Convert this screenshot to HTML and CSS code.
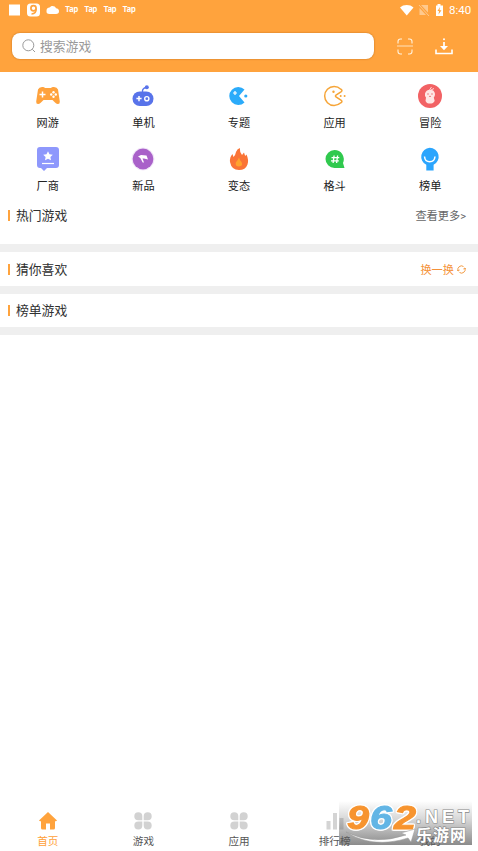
FILE: index.html
```
<!DOCTYPE html>
<html lang="zh-CN">
<head>
<meta charset="utf-8">
<title>首页</title>
<link rel="stylesheet" href="styles.css">
</head>
<body>
<div class="app">
  <header class="header">
    <div class="status">
      <svg class="status-left" width="50" height="14" viewBox="0 0 50 14">
        <rect width="11" height="11" y="1.5" fill="#fff"/>
        <rect x="18" y="0.5" width="13" height="13" rx="3.5" fill="#fff"/>
        <circle cx="24.5" cy="5.3" r="2.6" fill="none" stroke="#ffa33d" stroke-width="1.7"/>
        <path d="M27 5.5C27.300 9 25.800 11 22.500 11" fill="none" stroke="#ffa33d" stroke-width="1.700"/>
        <path d="M40.500 11a3 3 0 0 1-3-3.300C37.500 5.500 39 4.600 40.500 4.600C42 2.200 46 2.500 47 5.300C49 5.500 50 6.700 50 8.200C50 10 49 11 47 11Z" fill="#fff"/>
      </svg>
      <span class="tap">Tap</span><span class="tap">Tap</span><span class="tap">Tap</span><span class="tap">Tap</span>
      <svg class="status-right" width="46" height="14" viewBox="0 0 46 14">
        <path d="M1 4.500C4.500 1.200 11 1.200 14.500 4.500L7.750 12.500Z" fill="#fff"/>
        <path d="M22 2L29 9.500V2ZM20.500 5V12H27Z" fill="#ffc98d"/><path d="M20 2L30 13" stroke="#ffc98d"/>
        <path d="M37 2.500h1.500V1h3v1.500H44v10.500H37Z" fill="#fff"/>
        <path d="M41 4L38.500 8h1.500L39.500 11.500L42.500 7.200h-2Z" fill="#ffa33d"/>
      </svg>
      <span class="time">8:40</span>
    </div>
    <div class="search-row">
      <div class="search">
        <svg width="14" height="14" viewBox="0 0 14 14" fill="none" stroke="#999"><circle cx="6.300" cy="6.300" r="5.500"/><path d="M10.300 10.300L13 13"/></svg>
        <span>搜索游戏</span>
      </div>
      <svg class="scan" width="16" height="17" viewBox="0 0 16 17" fill="none" stroke="#fff3df" stroke-width="1.100"><path d="M1 5.500V3.500Q1 1 3.500 1H5M11 1h1.500Q15 1 15 3.500V5.500M15 11.500v2Q15 16 12.500 16H11M5 16H3.500Q1 16 1 13.500V11.500"/><path d="M0 8H16" stroke-width=".8"/></svg>
      <svg class="download" width="18" height="17" viewBox="0 0 18 17"><path d="M1 11.500V15.500H17V11.500" fill="none" stroke="#fff" stroke-width="1.600"/><path d="M9 4V10" stroke="#fff" stroke-width="1.700"/><path d="M5 8L9 12.300L13 8Z" fill="#fff"/><circle cx="9" cy="1.300" r="1" fill="#fff"/></svg>
    </div>
  </header>

  <nav class="categories">
    <a class="cat"><svg viewBox="0 0 26 26"><path d="M7 4Q9 3.500 10 5H16Q17 3.500 19 4Q22 4 23 6.500L24.800 18.500Q25 21 23 21Q21.500 21.300 19.500 19L17.500 17H8.500L6.500 19Q4.500 21.300 3 21Q1 21 1.200 18.500L3 6.500Q4 4 7 4Z" fill="#ffa23c"/><path d="M7.500 8.500v6M4.500 11.500h6" stroke="#fff" stroke-width="1.500"/><g fill="#fff"><circle cx="18.500" cy="9.300" r="1.200"/><circle cx="18.500" cy="13.700" r="1.200"/><circle cx="16.200" cy="11.500" r="1.200"/><circle cx="20.800" cy="11.500" r="1.200"/></g></svg><span>网游</span></a>
    <a class="cat"><svg viewBox="0 0 26 26"><rect x="2.500" y="8.500" width="21" height="14.500" rx="7.250" fill="#5873ea"/><path d="M12.500 9Q12 5.500 16 4.500" fill="none" stroke="#5873ea" stroke-width="1.300"/><circle cx="16.800" cy="4.300" r="2" fill="#5873ea"/><path d="M9 13v5.200M6.400 15.600h5.200" stroke="#fff" stroke-width="1.500"/><circle cx="16.800" cy="15.700" r="2.100" fill="none" stroke="#fff" stroke-width="1.400"/></svg><span>单机</span></a>
    <a class="cat"><svg viewBox="0 0 26 26"><path d="M18.500 6.500A9 9 0 1 0 18.500 19.500L13 13Z" fill="#2babfa"/><path d="M9 8v4M7 10h4" stroke="#fff" stroke-width="1.200"/><circle cx="19.800" cy="13" r="1.600" fill="#2babfa"/></svg><span>专题</span></a>
    <a class="cat"><svg viewBox="0 0 26 26"><path d="M18.800 6.200A9.500 9.500 0 1 0 18.800 19.800Q20.800 18.600 19.300 17.400L14 14Q12.900 13 14 12L19.300 8.600Q20.800 7.400 18.800 6.200Z" fill="none" stroke="#f6a538" stroke-width="1.500"/><circle cx="11.500" cy="8.800" r="1.200" fill="#f6a538"/><circle cx="18.700" cy="13" r="1" fill="#f6a538"/><circle cx="22.600" cy="13" r="1" fill="#f6a538"/></svg><span>应用</span></a>
    <a class="cat"><svg viewBox="0 0 26 26"><circle cx="13" cy="13" r="12" fill="#f26264"/><path d="M9 14.500Q7.500 13 8 10.500Q9 6.700 13 6.700Q17.500 6.700 18 11Q18 13.500 16.800 14.500L17.700 18L16 20Q13 21 10 20L8.500 18Z" fill="#ffe6e4"/><path d="M12.500 7L14.500 4M14 7L17 5.500" stroke="#ffd6d6"/><circle cx="11" cy="11" r=".7" fill="#e76265"/><circle cx="15" cy="11" r=".7" fill="#e76265"/><path d="M12 13.400h2" stroke="#e76265" stroke-width=".8"/></svg><span>冒险</span></a>
    <a class="cat"><svg viewBox="0 0 26 26"><path d="M5 1H21Q24 1 24 4V19Q24 22 21 22H12L9 25L6 22H5Q2 22 2 19V4Q2 1 5 1Z" fill="#8e98fc"/><path d="M13 5.300l1.500 3 3.300.4-2.400 2.300.6 3.300-3-1.600-3 1.600.6-3.300-2.400-2.300 3.300-.4Z" fill="#fff"/><path d="M7 17.500h12" stroke="#fff" stroke-width="1.200"/></svg><span>厂商</span></a>
    <a class="cat"><svg viewBox="0 0 26 26"><circle cx="13" cy="13" r="11" fill="none" stroke="#ead8f3" stroke-width=".7"/><circle cx="13" cy="13" r="10.400" fill="#a961c9"/><path d="M8 10.500L11 9L16.500 9.500L18 13.500L14 12.500L12.500 12.500L14 16.500H12.700L10.300 12Z" fill="#fff"/></svg><span>新品</span></a>
    <a class="cat"><svg viewBox="0 0 26 26"><path d="M4 16Q3.500 11 6.500 8L7.500 11Q9.500 9 10 6Q11 3 13.800 2Q13.600 6 16 9L18 6.500Q18.500 8 19.200 10L20.500 8.500Q23 14 21.500 18.500Q19.500 24 13 24Q5.500 24 4 16Z" fill="#fa7436"/><path d="M13 11.500Q13.500 14 15.500 16Q17.500 20 13 20.500Q9 20.500 9.800 16.500Q12 14 13 11.500Z" fill="#ffa32d"/></svg><span>变态</span></a>
    <a class="cat"><svg viewBox="0 0 26 26"><path d="M12.500 4A9.200 9.200 0 0 1 21 17L22.500 22H12.500A9 9 0 0 1 12.500 4Z" fill="#30c94e"/><path d="M12.100 9.500L11.100 17M15.600 9.500L14.600 17M9.500 11.700h7.800M9 14.900h7.800" stroke="#fff" stroke-width="1.300"/></svg><span>格斗</span></a>
    <a class="cat"><svg viewBox="0 0 26 26"><path d="M12.700 1.700A9 9 0 0 1 16.600 18.800V24.500H9.300V18.800A9 9 0 0 1 12.700 1.700Z" fill="#2ba5fd"/><path d="M7.500 10.500Q8 15.800 12.700 15.800Q17.500 15.800 18 10.500" fill="none" stroke="#fff" stroke-width="1.500"/></svg><span>榜单</span></a>
  </nav>

  <main>
    <section class="section hot"><h2><span>热门游戏</span></h2><a class="more">查看更多&gt;</a></section>
    <section class="section guess"><h2><span>猜你喜欢</span></h2><a class="swap">换一换<svg width="9" height="9" viewBox="0 0 9 9" fill="none" stroke="#f29a42"><path d="M1.200 6A3.600 3.600 0 0 1 6.500 1.500M7.800 3A3.600 3.600 0 0 1 2.500 7.500M0 4.700L1.200 6L2.600 5M6.400 4L7.800 3L9 4.300"/></svg></a></section>
    <section class="section rank"><h2><span>榜单游戏</span></h2></section>
  </main>

  <footer class="tabs">
    <a class="tab active"><svg viewBox="0 0 20 20"><path d="M10 1L19 9.500Q18.500 10.500 17 10.200V17Q17 18.500 15.500 18.500H12V12.500H8V18.500H4.500Q3 18.500 3 17V10.200Q1.500 10.500 1 9.500Z" fill="#ffa33d"/></svg><span>首页</span></a>
    <a class="tab"><svg viewBox="0 0 20 20"><path id="clover" d="M5.300 1.200Q9.300 1.200 9.300 5V9.200H5.300A4 4 0 0 1 5.300 1.200ZM14.700 1.200A4 4 0 0 1 14.700 9.200H10.700V5Q10.700 1.200 14.700 1.200ZM5.300 10.600H9.300V14.500Q9.300 18.600 5.300 18.600A4 4 0 0 1 5.300 10.600ZM10.700 10.600H14.700A4 4 0 0 1 14.700 18.600Q10.700 18.600 10.700 14.500Z" fill="#d2d2d2"/></svg><span>游戏</span></a>
    <a class="tab"><svg viewBox="0 0 20 20"><use href="#clover"/></svg><span>应用</span></a>
    <a class="tab"><svg viewBox="0 0 20 20" fill="#d4d4d4"><path d="M1.500 10h4v8.500h-4ZM8 2h4v16.500H8ZM14.500 7h4v11.500h-4Z"/></svg><span>排行榜</span></a>
    <a class="tab"><svg viewBox="0 0 20 20"></svg><span>我的</span></a>
  </footer>

  <div class="watermark">
    <svg width="133" height="44" viewBox="0 0 133 44">
      <g class="digits outline"><text x="8" y="27.500" textLength="22" lengthAdjust="spacingAndGlyphs">9</text><text x="31" y="27.500" textLength="22" lengthAdjust="spacingAndGlyphs">6</text><text x="55" y="27.500" textLength="22" lengthAdjust="spacingAndGlyphs">2</text></g>
      <path d="M7 31Q34 45 67 34L62 32L76 28L72 41L69 37Q34 48 7 31Z" fill="#fff" stroke="#999" stroke-width=".5"/>
      <text class="net" x="77" y="22" textLength="53">.NET</text>
      <text class="site" x="77" y="39.500" textLength="50">乐游网</text>
    </svg>
  </div>
</div>
</body>
</html>
```
FILE: styles.css
```
* { box-sizing: border-box; }
body { margin: 0; background: #fff; color: #303030; font-family: Roboto, "Noto Sans CJK SC", sans-serif; }
.app { position: relative; display: flex; flex-direction: column; height: 851px; overflow: hidden; }
svg { display: block; flex: none; }

.header { height: 72px; background: #ffa33d; }
.status { display: flex; height: 20px; padding: 0 7px 0 9px; color: #fff; }
.status-left { margin-top: 3px; margin-right: 6px; }
.tap { width: 19.200px; font: bold 7.500px/20px Inter, sans-serif; letter-spacing: -.2px; }
.status-right { margin: 3px 4px 0 auto; }
.time { width: 22px; font-size: 11.500px; line-height: 21px; white-space: nowrap; }
.search-row { display: flex; align-items: center; margin-top: 13px; height: 26px; padding-left: 12px; }
.search { display: flex; align-items: center; gap: 4px; width: 362px; height: 26px; padding-left: 10px; border-radius: 8px; background: #fff; color: #999; font-size: 12.800px; line-height: 26px; box-shadow: 0 0 2px #b96d1b; }
.search span { padding-top: 2px; }
.scan { margin-left: 23px; }
.download { margin-left: 22px; margin-top: 1px; }

.categories { display: grid; grid-template-columns: repeat(5, 1fr); grid-auto-rows: 63px; height: 132px; padding-top: 11px; }
.cat { display: flex; flex-direction: column; align-items: center; font-size: 11.200px; line-height: 18px; color: #222; }
.cat svg { width: 26px; height: 26px; margin-bottom: 6px; }

.section { display: flex; justify-content: space-between; padding: 0 12px 0 8px; border-bottom: 8px solid #efefef; }
.section h2 { display: flex; align-items: center; gap: 6px; height: 22px; margin: 0; font-size: 12.800px; font-weight: 400; }
.section h2::before { content: ""; width: 2px; height: 11px; background: #ffa33d; }
.section h2 span { padding-bottom: 1px; }
.section a { display: flex; align-items: center; gap: 3px; height: 22px; font-size: 11.200px; }
.hot { height: 48px; }
.guess { height: 42px; padding-top: 6px; }
.rank { height: 41px; padding-top: 5px; }
.more { color: #666; }
.swap { color: #f5923a; }

.tabs { display: grid; grid-template-columns: repeat(5, 1fr); height: 46px; margin-top: auto; padding-top: 6px; }
.tab { display: flex; flex-direction: column; align-items: center; color: #555; font-size: 10.600px; line-height: 16px; }
.tab svg { width: 20px; height: 20px; margin-bottom: 3px; }
.active { color: #ff9f38; }

.watermark { position: absolute; left: 339px; top: 801px; width: 133px; height: 44px; background: linear-gradient(rgba(110,110,110,0), rgba(110,110,110,.3) 45%, rgba(90,90,90,.7)); }
.watermark svg { overflow: visible; }
.digits { font: italic bold 33px "Liberation Sans", sans-serif; fill: #f7942f; stroke: #f7942f; stroke-width: 1px; filter: drop-shadow(1px 0 0 #fff) drop-shadow(-1px 0 0 #fff) drop-shadow(0 1px 0 #fff) drop-shadow(0 -1px 0 #fff); }
.digits text:nth-child(2) { fill: #62b5e5; stroke: #62b5e5; }
.net { font: bold 18px "Liberation Sans", sans-serif; fill: #fff; stroke: #888; stroke-width: 1.200px; paint-order: stroke; }
.site { font: bold 16px "Noto Sans CJK SC", sans-serif; fill: #fff; stroke: #888; stroke-width: 1.200px; paint-order: stroke; }
```
